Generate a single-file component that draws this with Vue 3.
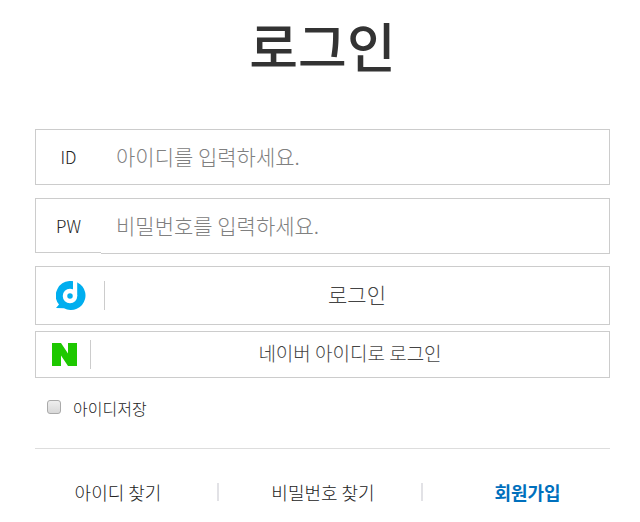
<template>
  <main class="login">
    <h1>로그인</h1>
    <form @submit.prevent>
      <div class="field">
        <label for="userId">ID</label>
        <input id="userId" v-model="userId" type="text" placeholder="아이디를 입력하세요." />
      </div>
      <div class="field pw">
        <label for="userPw">PW</label>
        <input id="userPw" v-model="userPw" type="password" placeholder="비밀번호를 입력하세요." />
      </div>
      <button type="submit" class="btn-login">
        <span class="icon">
          <svg width="30" height="30" viewBox="0 0 30 30" aria-hidden="true">
            <path d="M15 0A14.500 14.500 0 1 1 8 27.200L0 27L3 23.500A14.500 14.500 0 0 1 15 0Z" fill="#00aeef" />
            <circle cx="14" cy="15" r="5" fill="none" stroke="#fff" stroke-width="4.500" />
            <path d="M17 0h4.200v15h-4.200z" fill="#fff" />
          </svg>
        </span>
        <span class="text">로그인</span>
      </button>
      <button type="button" class="btn-naver">
        <span class="icon">
          <svg width="25" height="23" viewBox="0 0 25 23" aria-hidden="true">
            <path d="M0 0H9L16 10.500V0H25V23H16L9 12.500V23H0Z" fill="#1ec800" />
          </svg>
        </span>
        <span class="text">네이버 아이디로 로그인</span>
      </button>
      <div class="save">
        <input id="saveId" v-model="saveId" type="checkbox" />
        <label for="saveId">아이디저장</label>
      </div>
    </form>
    <nav>
      <a href="#" class="find-id">아이디 찾기</a>
      <i></i>
      <a href="#" class="find-pw">비밀번호 찾기</a>
      <i></i>
      <a href="#" class="join">회원가입</a>
    </nav>
  </main>
</template>

<script setup>
import { ref } from 'vue';

const userId = ref('');
const userPw = ref('');
const saveId = ref(false);
</script>

<style>
body {
  margin: 0;
  background: #fff;
}
</style>

<style scoped>
.login {
  padding: 5px 30px 0 35px;
  color: #222;
  font-family: 'Noto Sans CJK KR', sans-serif;
  font-weight: 300;
}

h1 {
  margin: 0 0 44px;
  color: #333;
  font-size: 53px;
  font-weight: 500;
  line-height: 80px;
  text-align: center;
}

form {
  display: flex;
  flex-direction: column;
}

input,
button {
  font-family: inherit;
  font-weight: inherit;
}

.field {
  display: flex;
  height: 56px;
  margin-bottom: 13px;
}

.pw {
  margin-bottom: 12px;
}

.field label {
  box-sizing: border-box;
  width: 66px;
  border: 1px solid #ccc;
  border-right: 0;
  font-size: 17px;
  line-height: 54px;
  text-align: center;
}

.pw label {
  height: 55px;
}

.field input {
  box-sizing: border-box;
  flex: 1;
  min-width: 0;
  padding: 0 15px 2px;
  border: 1px solid #ccc;
  border-left: 0;
  outline: 0;
  font-size: 21px;
}

.field input::placeholder {
  color: #808080;
}

button {
  display: flex;
  align-items: center;
  padding: 0;
  border: 1px solid #ccc;
  background: #fff;
  color: #444;
  cursor: pointer;
}

.icon {
  display: flex;
  align-items: center;
  box-sizing: border-box;
  height: 29px;
  border-right: 1px solid #ccc;
}

.text {
  flex: 1;
  padding: 0 0 4px;
}

.btn-login {
  height: 59px;
  margin-bottom: 6px;
  font-size: 21px;
}

.btn-login .icon {
  width: 69px;
  padding-left: 20px;
}

.btn-naver {
  height: 47px;
  font-size: 19px;
}

.btn-naver .icon {
  width: 55px;
  padding-left: 16px;
}

.save {
  display: flex;
  align-items: center;
  gap: 12px;
  height: 24px;
  margin: 18px 0 28px;
  padding-left: 12px;
  font-size: 16px;
}

.save input {
  appearance: none;
  box-sizing: border-box;
  width: 14px;
  height: 14px;
  margin: 0 0 2px;
  border: 1px solid #aaa;
  border-radius: 3px;
  background: linear-gradient(#eee, #d8d8d8);
}

.save input:checked {
  background: #0070bd;
}

nav {
  display: flex;
  align-items: center;
  padding-top: 30px;
  border-top: 1px solid #ddd;
  font-size: 18px;
  line-height: 26px;
}

nav a {
  color: #222;
  text-align: center;
  text-decoration: none;
}

nav i {
  width: 2px;
  height: 18px;
  background: #e2e2e6;
}

.find-id {
  flex: 166;
  padding-right: 16px;
}

.find-pw {
  flex: 196;
  padding-left: 6px;
}

.join {
  flex: 165;
  padding-left: 22px;
  color: #0070bd;
  font-weight: 700;
}
</style>
